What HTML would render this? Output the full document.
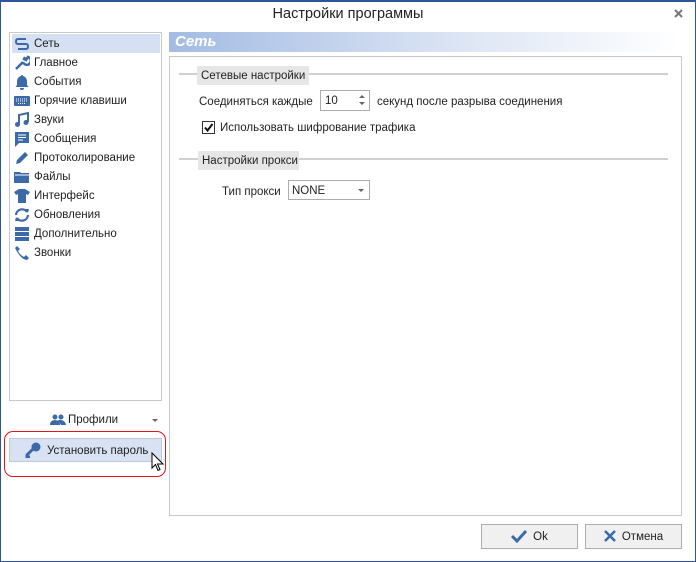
<!DOCTYPE html>
<html><head><meta charset="utf-8"><style>
*{box-sizing:border-box;margin:0;padding:0}
body{width:696px;height:562px;background:#fff;font-family:"Liberation Sans",sans-serif;font-size:11.5px;color:#222;position:relative;overflow:hidden;white-space:nowrap}
.win{position:absolute;left:0;top:0;width:696px;height:562px;border:1px solid #2b579a;border-top:2px solid #2b579a}
.abs{position:absolute}
.title{left:0;width:696px;top:6px;text-align:center;font-size:14.5px;color:#222}
.list{left:9px;top:32px;width:153px;height:369px;border:1px solid #c8c8c8}
.item{position:absolute;left:2px;width:148px;height:19px;line-height:20px;padding-left:22px;font-size:11.5px}
.item svg{position:absolute;left:2px;top:2px}
.sel{background:#d5e0f2}
.hdr{left:169px;top:32px;width:510px;height:20px;background:linear-gradient(90deg,#a3bbe3,#dfe7f5 60%,#fff);color:#fff;font-weight:bold;font-style:italic;font-size:15px;padding-left:6px;line-height:19px}
.panel{left:169px;top:56px;width:513px;height:460px;border:1px solid #c8c8c8}
.gline{height:2px;background:#d0d0d0}
.gcap{background:#e6e6e6;padding:0 4px;height:19px;line-height:20px}
.btn{border:1px solid #adadad;background:#f0f0f0;height:25px;line-height:24px;text-align:center}
</style></head><body>
<div class="win"></div>
<div class="abs title">Настройки программы</div>
<svg class="abs" style="left:674px;top:9px" width="9" height="9"><path d="M1 1L8 8M8 1L1 8" stroke="#777" stroke-width="2"/></svg>

<div class="abs list">
<div class="item sel" style="top:1px"><svg width="16" height="16"><path d="M12 3H4Q2 3 2 5.5T4 8h8q2 0 2 2.5T12 13H4" fill="none" stroke="#3c6aa8" stroke-width="2"/></svg>Сеть</div>
<div class="item" style="top:20px"><svg width="16" height="16"><path d="M2 14L9 7M9 7a4 4 0 1 0 5-5l-2 3-2-1 1-2" fill="none" stroke="#3c6aa8" stroke-width="2.5"/></svg>Главное</div>
<div class="item" style="top:39px"><svg width="16" height="16"><path d="M8 1a1 1 0 0 1 1 1q4 1 4 6v3l1.5 2h-13L3 11V8q0-5 4-6a1 1 0 0 1 1-1zM6 14h4a2 2 0 0 1-4 0z" fill="#3c6aa8"/></svg>События</div>
<div class="item" style="top:58px"><svg width="16" height="16"><rect x="0" y="3" width="16" height="10" rx="1" fill="#3c6aa8"/><path d="M2 6h12M2 8h12M4 10.5h8" stroke="#fff" stroke-dasharray="1 1"/></svg>Горячие клавиши</div>
<div class="item" style="top:77px"><svg width="16" height="16"><path d="M5 12V3l9-2v9" fill="none" stroke="#3c6aa8" stroke-width="2"/><circle cx="3.5" cy="12.5" r="2.5" fill="#3c6aa8"/><circle cx="12" cy="10.5" r="2.5" fill="#3c6aa8"/></svg>Звуки</div>
<div class="item" style="top:96px"><svg width="16" height="16"><path d="M1 1h14v11H5l-4 4z" fill="#3c6aa8"/><path d="M4 4h8M4 6.5h8M4 9h5" stroke="#fff"/></svg>Сообщения</div>
<div class="item" style="top:115px"><svg width="16" height="16"><path d="M2 14l1-4 8-8 3 3-8 8z" fill="#3c6aa8"/></svg>Протоколирование</div>
<div class="item" style="top:134px"><svg width="16" height="16"><path d="M0 3h6l1 1h8v10H0z" fill="#3c6aa8"/><path d="M1 6h14" stroke="#fff"/></svg>Файлы</div>
<div class="item" style="top:153px"><svg width="16" height="16"><path d="M5 1h6l5 3-2 3-2-1v9H4V6L2 7 0 4z" fill="#3c6aa8"/></svg>Интерфейс</div>
<div class="item" style="top:172px"><svg width="16" height="16"><path d="M2 8a6 6 0 0 1 11-3M14 8a6 6 0 0 1-11 3" fill="none" stroke="#3c6aa8" stroke-width="2.2"/><path d="M11 2l4 0-1 4zM5 14l-4 0 1-4z" fill="#3c6aa8"/></svg>Обновления</div>
<div class="item" style="top:191px"><svg width="16" height="16"><rect x="1" y="1" width="14" height="4" fill="#3c6aa8"/><rect x="1" y="6" width="14" height="4" fill="#3c6aa8"/><rect x="1" y="11" width="14" height="4" fill="#3c6aa8"/></svg>Дополнительно</div>
<div class="item" style="top:210px"><svg width="16" height="16"><path d="M3 1l3 3-2 2q2 4 6 6l2-2 3 3-2 2Q7 15 1 3z" fill="#3c6aa8"/></svg>Звонки</div>
</div>

<svg class="abs" style="left:50px;top:414px" width="16" height="12"><circle cx="5" cy="3" r="2.5" fill="#3c6aa8"/><circle cx="11" cy="3" r="2.5" fill="#3c6aa8"/><path d="M0 11q0-5 5-5t5 5zM8 6q7-1 8 5h-5" fill="#3c6aa8"/></svg>
<div class="abs" style="left:68px;top:414px">Профили</div>
<svg class="abs" style="left:152px;top:419px" width="7" height="4"><path d="M0 0h6L3 3z" fill="#666"/></svg>

<div class="abs" style="left:4px;top:431px;width:162px;height:46px;border:1.5px solid #e0141e;border-radius:9px"></div>
<div class="abs" style="left:9px;top:438px;width:153px;height:24px;background:#d8e2f3;border:1px solid #bcc8de"></div>
<svg class="abs" style="left:25px;top:442px" width="16" height="16"><circle cx="11" cy="5" r="4.5" fill="#3c6aa8"/><path d="M9 6L2 13v2h3" stroke="#3c6aa8" stroke-width="3" fill="none"/></svg>
<div class="abs" style="left:47px;top:445px">Установить пароль</div>
<svg class="abs" style="left:151px;top:452px" width="14" height="20"><path d="M1 1v15l3.5-3.5 2.5 6 2-1-2.5-5.5H12z" fill="#fff" stroke="#000"/></svg>

<div class="abs hdr">Сеть</div>
<div class="abs panel"></div>
<div class="abs gline" style="left:179px;top:73px;width:489px"></div>
<div class="abs gcap" style="left:197px;top:66px">Сетевые настройки</div>
<div class="abs" style="left:199px;top:96px">Соединяться каждые</div>
<div class="abs" style="left:320px;top:90px;width:50px;height:21px;border:1px solid #acacac;background:#fff;padding:4px 4px">10</div>
<svg class="abs" style="left:359px;top:94px" width="6" height="12"><path d="M0 4L3 1 6 4zM0 8l3 3 3-3z" fill="#666"/></svg>
<div class="abs" style="left:377px;top:96px">секунд после разрыва соединения</div>
<div class="abs" style="left:202px;top:121px;width:13px;height:13px;border:1px solid #333;background:#fff"></div>
<svg class="abs" style="left:203px;top:122px" width="11" height="11"><path d="M2 5.5l2.5 3L9.5 2" stroke="#111" stroke-width="2" fill="none"/></svg>
<div class="abs" style="left:220px;top:122px">Использовать шифрование трафика</div>
<div class="abs gline" style="left:179px;top:158px;width:489px"></div>
<div class="abs gcap" style="left:198px;top:151px;width:101px">Настройки прокси</div>
<div class="abs" style="left:222px;top:186px">Тип прокси</div>
<div class="abs" style="left:288px;top:180px;width:82px;height:20px;border:1px solid #acacac;background:#fff;padding:4px 3px">NONE</div>
<svg class="abs" style="left:358px;top:189px" width="6" height="3"><path d="M0 0h6L3 3z" fill="#666"/></svg>

<div class="abs btn" style="left:481px;top:524px;width:97px"><svg style="vertical-align:-3px;margin-right:6px" width="16" height="14"><path d="M1 7l5 5L15 2" stroke="#3c6aa8" stroke-width="3" fill="none"/></svg>Ok</div>
<div class="abs btn" style="left:585px;top:524px;width:97px"><svg style="vertical-align:-2px;margin-right:6px" width="12" height="12"><path d="M1 1l10 10M11 1L1 11" stroke="#3c6aa8" stroke-width="2.5"/></svg>Отмена</div>
</body></html>
